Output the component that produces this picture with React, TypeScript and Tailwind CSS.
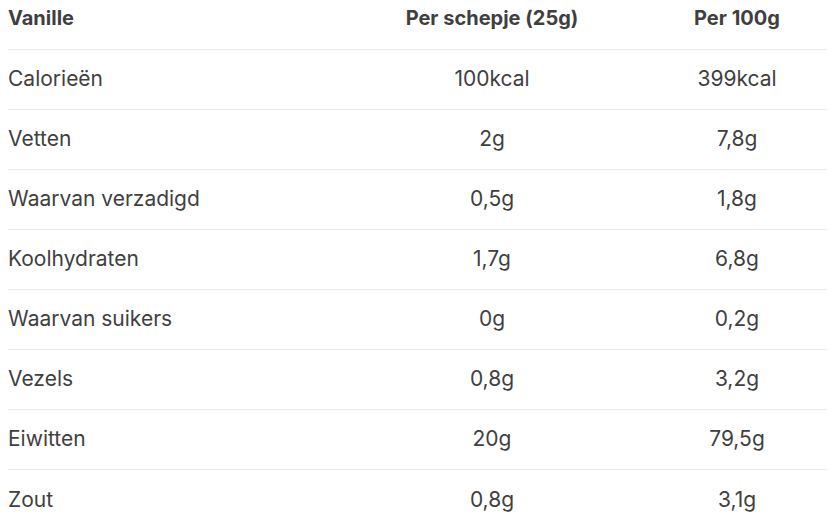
const rows: [string, string, string][] = [
  ["Calorieën", "100kcal", "399kcal"],
  ["Vetten", "2g", "7,8g"],
  ["Waarvan verzadigd", "0,5g", "1,8g"],
  ["Koolhydraten", "1,7g", "6,8g"],
  ["Waarvan suikers", "0g", "0,2g"],
  ["Vezels", "0,8g", "3,2g"],
  ["Eiwitten", "20g", "79,5g"],
  ["Zout", "0,8g", "3,1g"],
];

export default function App() {
  return (
    <div className="bg-white px-2 font-['Inter',sans-serif] text-[#3f3f3f]">
      <table className="w-[819px] border-collapse">
        <thead>
          <tr className="h-[49px] border-b border-[#ebebeb] align-top text-[20px]">
            <th className="w-[329px] pt-[3px] text-left font-bold">Vanille</th>
            <th className="w-[310px] pt-[3px] text-center font-bold">Per schepje (25g)</th>
            <th className="w-[180px] pt-[3px] text-center font-bold">Per 100g</th>
          </tr>
        </thead>
        <tbody className="text-[21px]">
          {rows.map(([name, scoop, per100], i) => (
            <tr
              key={name}
              className={`h-[60px] ${i < rows.length - 1 ? "border-b border-[#ebebeb]" : ""}`}
            >
              <td className="text-left">{name}</td>
              <td className="text-center">{scoop}</td>
              <td className="text-center">{per100}</td>
            </tr>
          ))}
        </tbody>
      </table>
    </div>
  );
}
